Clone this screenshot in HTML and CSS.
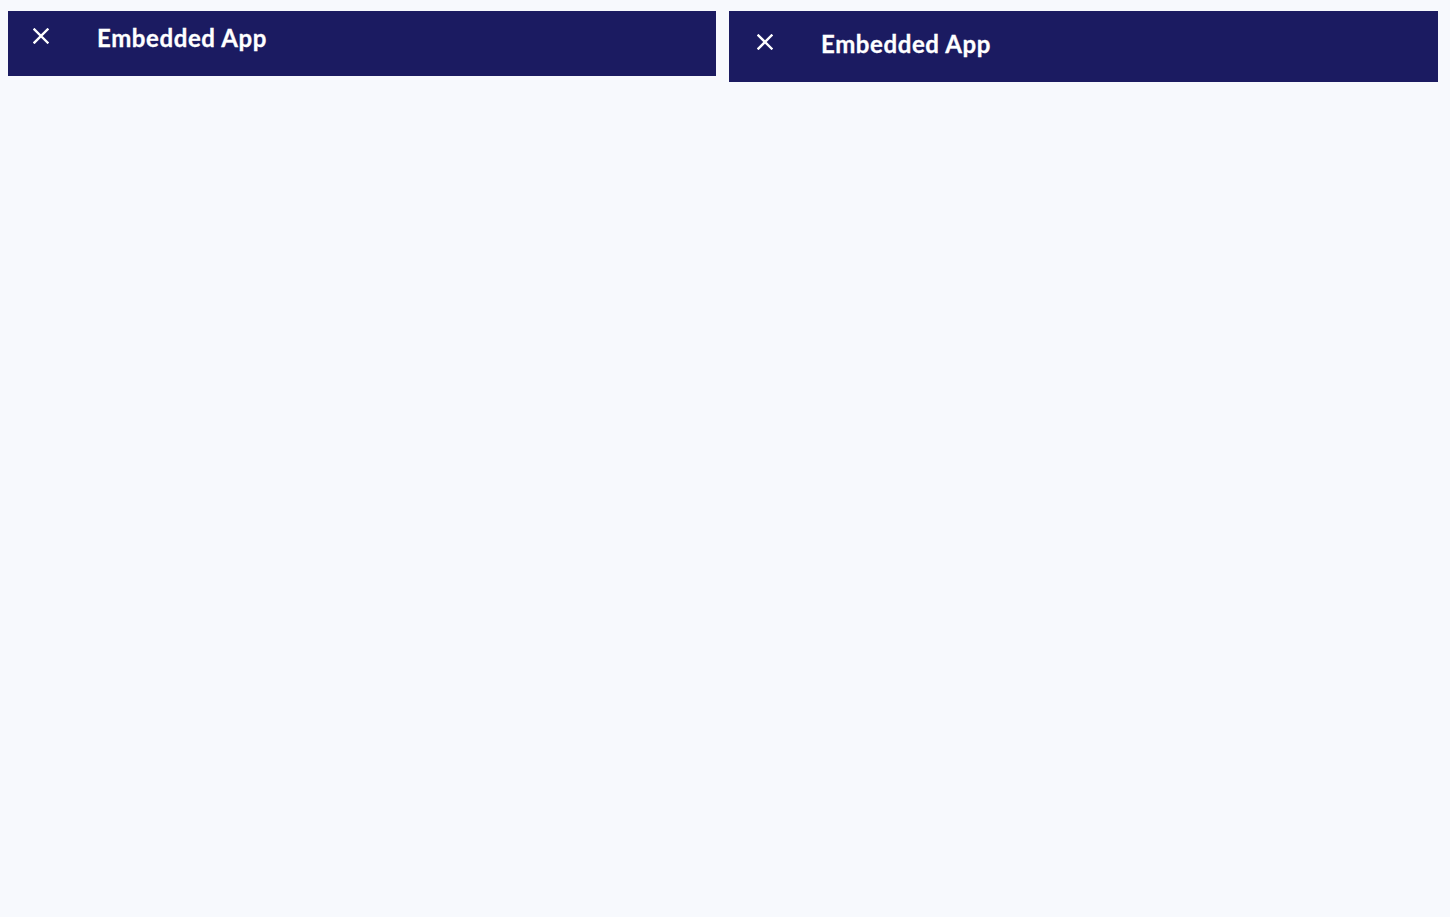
FILE: index.html
```html
<!DOCTYPE html>
<html>
<head>
<meta charset="utf-8">
<link rel="stylesheet" href="styles.css">
</head>
<body>
<div class="row">
  <div class="bar bar-left">
    <span class="close">
      <svg width="16" height="16" viewBox="0 0 16 16"><path d="M1.5 1.5 L14.5 14.5 M14.5 1.5 L1.5 14.5" stroke="#fff" stroke-width="2.4" stroke-linecap="square" fill="none"/></svg>
    </span>
    <span class="title">Embedded App</span>
  </div>
  <div class="bar bar-right">
    <span class="close">
      <svg width="16" height="16" viewBox="0 0 16 16"><path d="M1.5 1.5 L14.5 14.5 M14.5 1.5 L1.5 14.5" stroke="#fff" stroke-width="2.4" stroke-linecap="square" fill="none"/></svg>
    </span>
    <span class="title">Embedded App</span>
  </div>
</div>
</body>
</html>
```
FILE: styles.css
```css
html, body {
  margin: 0;
  padding: 0;
  background: #f7f9fd;
  height: 100%;
}
body {
  padding: 11px 12px 0 8px;
  box-sizing: border-box;
  font-family: "Lato", "Open Sans", sans-serif;
}
.row {
  display: grid;
  grid-template-columns: 708px 1fr;
  gap: 13px;
  align-items: start;
}
.bar {
  background: #1b1b61;
  display: flex;
  align-items: center;
  color: #fff;
  box-sizing: border-box;
}
.bar-left {
  height: 65px;
  padding: 0 0 16px 25px;
}
.bar-right {
  height: 71px;
  padding: 0 0 10px 28px;
}
.close {
  width: 16px;
  height: 16px;
  display: flex;
}
.title {
  margin-left: 48px;
  margin-top: 4px;
  font-weight: 700;
  font-size: 24px;
  letter-spacing: 0.6px;
  -webkit-text-stroke: 0.3px #fff;
}
```
